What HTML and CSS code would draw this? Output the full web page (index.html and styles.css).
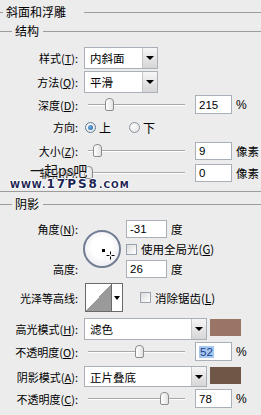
FILE: index.html
```html
<!DOCTYPE html>
<html>
<head>
<meta charset="utf-8">
<link rel="stylesheet" href="styles.css">
</head>
<body>
<div class="panel">
  <div class="hdr hdr1"><span class="ln ln1"></span><span class="ht ht1">斜面和浮雕</span><span class="ln lnr"></span></div>
  <div class="hdr hdr2"><span class="ln ln2"></span><span class="ht ht2">结构</span><span class="ln lnr"></span></div>

  <div class="row r-style">
    <div class="lbl">样式(<u>T</u>):</div>
    <div class="dd dd-short"><span class="ddt">内斜面</span><span class="dda"><i class="tri"></i></span></div>
  </div>
  <div class="row r-method">
    <div class="lbl">方法(<u>Q</u>):</div>
    <div class="dd dd-short"><span class="ddt">平滑</span><span class="dda"><i class="tri"></i></span></div>
  </div>
  <div class="row r-depth">
    <div class="lbl">深度(<u>D</u>):</div>
    <div class="slider"><div class="track"></div><div class="thumb" style="left:21px"></div></div>
    <div class="num">215</div><span class="unit">%</span>
  </div>
  <div class="row r-dir">
    <div class="lbl">方向:</div>
    <span class="radio on"><i></i></span><span class="rtxt">上</span>
    <span class="radio r2"></span><span class="rtxt">下</span>
  </div>
  <div class="row r-size">
    <div class="lbl">大小(<u>Z</u>):</div>
    <div class="slider"><div class="track"></div><div class="thumb" style="left:9px"></div></div>
    <div class="num">9</div><span class="unit">像素</span>
  </div>
  <div class="row r-soft">
    <div class="lbl">软化(<u>F</u>):</div>
    <div class="slider"><div class="track"></div><div class="thumb" style="left:0px"></div></div>
    <div class="num">0</div><span class="unit">像素</span>
  </div>
  <div class="sep"></div>

  <div class="hdr hdr3"><span class="ln ln2"></span><span class="ht ht2">阴影</span><span class="ln lnr"></span></div>

  <div class="angle">
    <div class="lbl a-l1">角度(<u>N</u>):</div>
    <div class="dialcell">
      <div class="dial"><i class="dot"></i></div>
      <svg class="cursor" width="9" height="9" viewBox="0 0 9 9"><path d="M4.5 0.5V8.5M0.5 4.5H8.5" stroke="#000" stroke-width="1"/><rect x="3.5" y="3.5" width="2" height="2" fill="#fff"/></svg>
    </div>
    <div class="a-c1"><div class="num num-w">-31</div><span class="unit">度</span></div>
    <div class="a-c2"><span class="chk"></span><span class="ctxt">使用全局光(<u>G</u>)</span></div>
    <div class="lbl a-l3">高度:</div>
    <div class="a-c3"><div class="num num-w">26</div><span class="unit">度</span></div>
  </div>

  <div class="row r-contour">
    <div class="lbl">光泽等高线:</div>
    <div class="contour"><span class="cv"></span><span class="ca"><i class="tri"></i></span></div>
    <span class="chk chk2"></span><span class="ctxt">消除锯齿(<u>L</u>)</span>
  </div>
  <div class="row r-hl">
    <div class="lbl">高光模式(<u>H</u>):</div>
    <div class="dd dd-long"><span class="ddt">滤色</span><span class="dda"><i class="tri"></i></span></div>
    <span class="swatch sw1"></span>
  </div>
  <div class="row r-op1">
    <div class="lbl">不透明度(<u>O</u>):</div>
    <div class="slider"><div class="track"></div><div class="thumb" style="left:51px"></div></div>
    <div class="num"><span class="sel">52</span></div><span class="unit">%</span>
  </div>
  <div class="row r-sh">
    <div class="lbl">阴影模式(<u>A</u>):</div>
    <div class="dd dd-long"><span class="ddt">正片叠底</span><span class="dda"><i class="tri"></i></span></div>
    <span class="swatch sw2"></span>
  </div>
  <div class="row r-op2">
    <div class="lbl">不透明度(<u>C</u>):</div>
    <div class="slider"><div class="track"></div><div class="thumb" style="left:76px"></div></div>
    <div class="num">78</div><span class="unit">%</span>
  </div>

  <div class="wm1">一起ps吧</div>
  <div class="wm2"><span class="s">WWW.</span><span class="b">17PS8</span><span class="s">.COM</span></div>
</div>
</body>
</html>
```
FILE: styles.css
```css
* { box-sizing: border-box; }
html, body { margin: 0; padding: 0; }
body {
  width: 261px;
  height: 415px;
  overflow: hidden;
  background: #ececec;
  font-family: "Noto Sans CJK SC", "Liberation Sans", sans-serif;
  font-size: 11px;
  color: #000;
}
u { text-decoration: underline; text-underline-offset: 1px; }
.panel { position: relative; width: 261px; height: 415px; }

.hdr { display: flex; align-items: center; font-size: 12px; }
.hdr1 { height: 24px; }
.hdr2 { height: 14px; }
.hdr3 { height: 14px; margin-top: 5px; }
.ln { height: 1px; background: #9c9c9c; }
.ln1 { width: 3px; }
.ln2 { width: 12px; }
.lnr { flex: 1; }
.ht { line-height: 14px; white-space: nowrap; }
.ht1 { padding: 0 18px 0 3px; }
.ht2 { padding: 0 4px 0 3px; }

.row { display: flex; align-items: center; }
.lbl {
  width: 80px;
  flex: none;
  text-align: right;
  padding-right: 2px;
  white-space: nowrap;
  line-height: 14px;
}
.r-style { margin-top: 9px; height: 22px; }
.r-method { margin-top: 2px; height: 22px; }
.r-depth { margin-top: 2px; height: 19px; }
.r-dir { margin-top: 4px; height: 18px; }
.r-size { margin-top: 6px; height: 18px; }
.r-soft { margin-top: 4px; height: 18px; }
.sep { margin-top: 9px; height: 1px; background: #9c9c9c; }
.r-contour { margin-top: 5px; height: 29px; }
.r-hl { margin-top: 6px; height: 22px; }
.r-op1 { margin-top: 2px; height: 19px; }
.r-sh { margin-top: 5px; height: 21px; }
.r-op2 { margin-top: 2px; height: 19px; }

/* dropdown */
.dd {
  margin-left: 4px;
  height: 100%;
  display: flex;
  border: 1px solid #a9b0b8;
  background: #fff;
}
.dd-short { width: 74px; }
.dd-long { width: 123px; }
.ddt { flex: 1; padding-left: 5px; line-height: 20px; font-size: 11.5px; }
.dda {
  width: 15px;
  border-left: 1px solid #c3c7cc;
  background: linear-gradient(#f6f6f6, #d6d6d6);
  display: flex;
  align-items: center;
  justify-content: center;
}
.tri {
  width: 0; height: 0;
  border-left: 4px solid transparent;
  border-right: 4px solid transparent;
  border-top: 4px solid #000;
}

/* slider */
.slider { position: relative; width: 107px; height: 100%; margin-left: 4px; flex: none; }
.track {
  position: absolute;
  left: 4px; right: 6px; top: 50%;
  height: 2px;
  margin-top: -1px;
  border-top: 1px solid #a8a8a8;
  border-bottom: 1px solid #fff;
}
.thumb {
  position: absolute;
  top: 50%;
  margin-top: -7px;
  width: 9px;
  height: 13px;
  border: 1px solid #8c8c8c;
  border-radius: 4px 4px 2px 2px;
  background: linear-gradient(90deg, #ffffff, #e2e2e2);
}

.num {
  width: 37px;
  height: 19px;
  margin-left: 4px;
  flex: none;
  border: 1px solid #a9b0b8;
  background: #fff;
  font-family: "Liberation Sans", sans-serif;
  font-size: 11.5px;
  padding-left: 3px;
  display: flex;
  align-items: center;
}
.r-size .num, .r-soft .num { height: 18px; }
.num-w { width: 41px; height: 18px; margin-left: 0; }
.sel { background: #a6c8ef; color: #1d3f8e; padding: 0 1px; }
.unit { margin-left: 4px; font-size: 11.5px; white-space: nowrap; }
.r-depth .unit, .r-op1 .unit, .r-op2 .unit { font-family: "Liberation Sans", sans-serif; font-size: 12px; }

/* radios */
.radio {
  width: 11px; height: 11px;
  border-radius: 50%;
  border: 1px solid #8a96a3;
  background: radial-gradient(circle at 40% 40%, #ffffff, #dcdcdc);
  display: flex; align-items: center; justify-content: center;
  flex: none;
  margin-left: 5px;
}
.radio.on i {
  width: 5px; height: 5px; border-radius: 50%;
  background: radial-gradient(circle at 40% 40%, #6fb0e6, #1a5c9a);
}
.radio.on { border-color: #5f7a93; }
.r2 { margin-left: 18px; }
.rtxt { margin-left: 3px; font-size: 12px; }

/* angle block */
.angle {
  margin-top: 9px;
  display: grid;
  grid-template-columns: 80px 40px auto;
  grid-template-rows: 18px 22px 18px;
  column-gap: 3px;
}
.a-l1 { grid-column: 1; grid-row: 1; align-self: center; }
.a-l3 { grid-column: 1; grid-row: 3; align-self: center; }
.dialcell { grid-column: 2; grid-row: 1 / span 3; position: relative; align-self: center; height: 38px; }
.dial {
  width: 38px; height: 38px;
  border-radius: 50%;
  border: 2px solid #737d93;
  background: radial-gradient(circle at 50% 45%, #ffffff 40%, #e8e8ee 85%, #c8cad4);
  box-shadow: inset 0 0 0 1px #f4f4f8;
  position: relative;
}
.dot { position: absolute; left: 17px; top: 17px; width: 3px; height: 3px; background: #000; }
.cursor { position: absolute; left: 23px; top: 21px; }
.a-c1, .a-c3 { grid-column: 3; display: flex; align-items: center; }
.a-c1 { grid-row: 1; }
.a-c3 { grid-row: 3; }
.a-c2 { grid-column: 3; grid-row: 2; display: flex; align-items: center; }

.chk {
  width: 11px; height: 11px; flex: none;
  border: 1px solid #9aa3ad;
  background: linear-gradient(135deg, #dcdcdc, #ffffff);
}
.ctxt { margin-left: 4px; font-size: 11.5px; white-space: nowrap; }
.chk2 { margin-left: 17px; }

/* contour */
.contour {
  margin-left: 5px;
  width: 38px; height: 29px;
  border: 1px solid #6a6a6a;
  display: flex;
  background: #fff;
}
.cv { flex: 1; background: linear-gradient(to top left, #9a9a9a 50%, #ffffff 50%); }
.ca {
  width: 11px;
  border-left: 1px solid #6a6a6a;
  display: flex; align-items: center; justify-content: center;
  background: #fff;
}
.ca .tri { border-left-width: 3px; border-right-width: 3px; border-top-width: 4px; }

.swatch { width: 31px; height: 17px; margin-left: 3px; align-self: flex-start; margin-top: 1px; }
.sw1 { background: #9a7464; }
.sw2 { background: #6f5646; }

/* watermark overlays */
.wm1 {
  position: absolute;
  left: 30px; top: 161px;
  font-size: 14px;
  color: #111;
  line-height: 18px;
  text-shadow: 0 0 2px #ececec, 0 0 2px #ececec, 0 0 3px #ececec;
}
.wm2 {
  position: absolute;
  left: 10px; top: 179px;
  font-family: "DejaVu Sans", sans-serif;
  font-weight: bold;
  color: #1d2454;
  line-height: 11px;
  letter-spacing: 1px;
  text-shadow: 1px 0 0 #fff, -1px 0 0 #fff, 0 1px 0 #fff, 0 -1px 0 #fff;
  white-space: nowrap;
}
.wm2 .s { font-size: 9px; }
.wm2 .b { font-size: 12px; letter-spacing: 2px; }
```
